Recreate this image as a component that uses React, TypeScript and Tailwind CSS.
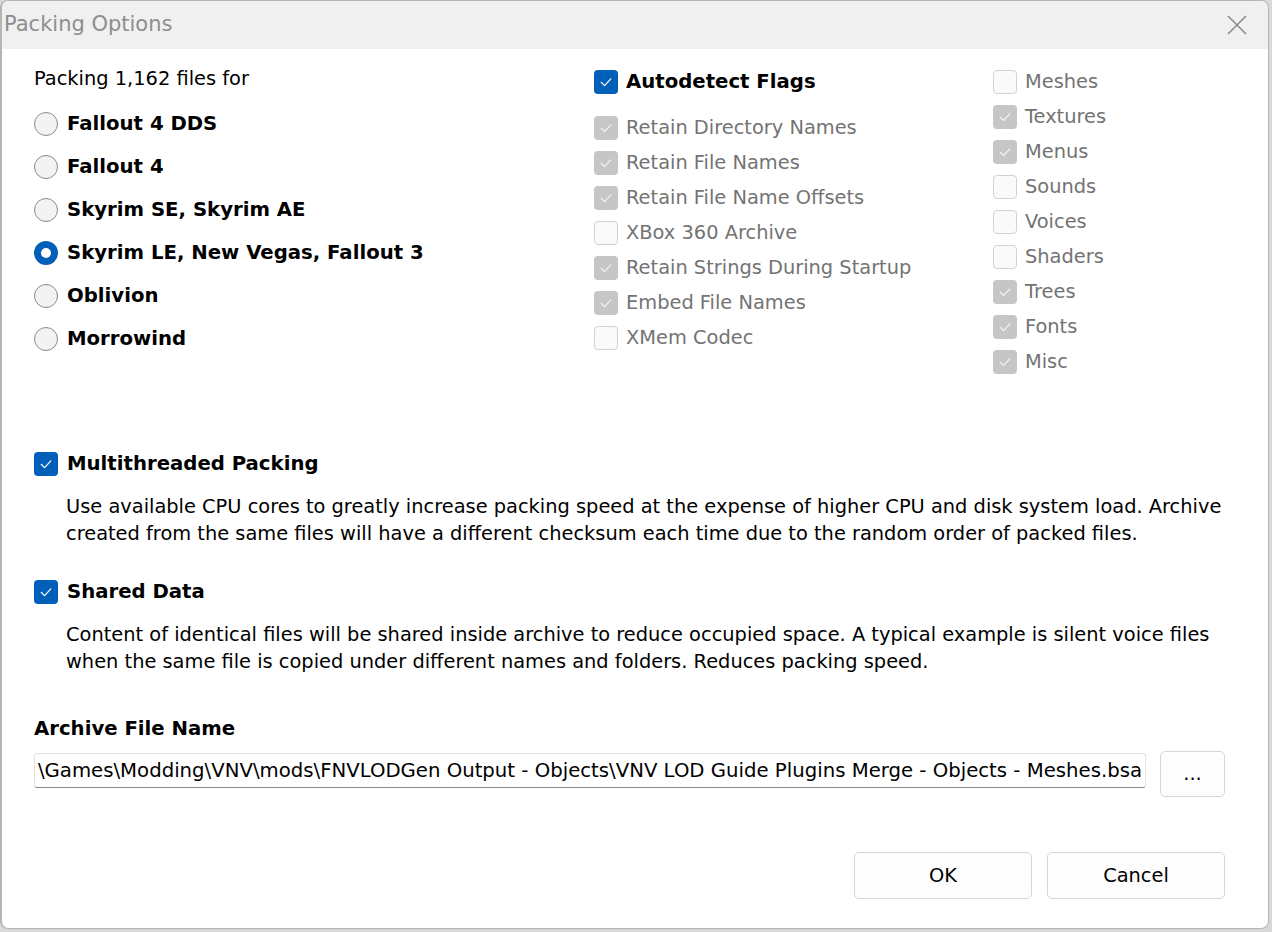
import React from 'react'

const font = { fontFamily: '"DejaVu Sans", Verdana, sans-serif' }

function Check({ color = 'white' }: { color?: string }) {
  return (
    <svg width="14" height="14" viewBox="0 0 14 14" fill="none">
      <path d="M2.2 7.3 L5.6 10.6 L11.8 3.8" stroke={color} strokeWidth="1.2" strokeLinecap="round" strokeLinejoin="round" />
    </svg>
  )
}

type BoxKind = 'blue' | 'gray' | 'empty'

function Box({ kind }: { kind: BoxKind }) {
  if (kind === 'blue') {
    return (
      <div className="w-[24px] h-[24px] rounded-[4px] bg-[#005fb8] flex items-center justify-center shrink-0">
        <Check />
      </div>
    )
  }
  if (kind === 'gray') {
    return (
      <div className="w-[24px] h-[24px] rounded-[4px] bg-[#c6c6c6] flex items-center justify-center shrink-0">
        <Check color="#f4f4f4" />
      </div>
    )
  }
  return <div className="w-[24px] h-[24px] rounded-[4px] border border-[#d2d2d2] bg-[#fafafa] shrink-0" />
}

function Radio({ checked, label }: { checked?: boolean; label: string }) {
  return (
    <div className="h-[43px] flex items-center gap-[9px]">
      {checked ? (
        <div className="w-[24px] h-[24px] rounded-full bg-[#005fb8] flex items-center justify-center shrink-0">
          <div className="w-[10px] h-[10px] rounded-full bg-white" />
        </div>
      ) : (
        <div className="w-[24px] h-[24px] rounded-full border border-[#8a8a8a] bg-[#f3f3f3] shrink-0" />
      )}
      <span className="font-bold text-[19.7px] text-black">{label}</span>
    </div>
  )
}

function Flag({ kind, label }: { kind: BoxKind; label: string }) {
  return (
    <div className="h-[35px] flex items-center gap-[8px]">
      <Box kind={kind} />
      <span className="text-[19.4px] text-[#737373]">{label}</span>
    </div>
  )
}

const games = ['Fallout 4 DDS', 'Fallout 4', 'Skyrim SE, Skyrim AE', 'Skyrim LE, New Vegas, Fallout 3', 'Oblivion', 'Morrowind']

const flags: [BoxKind, string][] = [
  ['gray', 'Retain Directory Names'],
  ['gray', 'Retain File Names'],
  ['gray', 'Retain File Name Offsets'],
  ['empty', 'XBox 360 Archive'],
  ['gray', 'Retain Strings During Startup'],
  ['gray', 'Embed File Names'],
  ['empty', 'XMem Codec'],
]

const types: [BoxKind, string][] = [
  ['empty', 'Meshes'],
  ['gray', 'Textures'],
  ['gray', 'Menus'],
  ['empty', 'Sounds'],
  ['empty', 'Voices'],
  ['empty', 'Shaders'],
  ['gray', 'Trees'],
  ['gray', 'Fonts'],
  ['gray', 'Misc'],
]

export default function App() {
  return (
    <div className="w-[1272px] h-[932px] bg-[#d9d9d9] overflow-hidden" style={font}>
      <div className="w-[1269px] h-[929px] rounded-[8px] border border-[#b4b4b4] border-l-2 bg-white flex flex-col overflow-hidden">
        {/* title bar */}
        <div className="h-[48px] bg-[#f0f0f0] flex items-center justify-between shrink-0">
          <span className="pl-[2px] text-[21px] text-[#8e8e8e]">Packing Options</span>
          <svg width="20" height="20" viewBox="0 0 20 20" className="mr-[21px]">
            <path d="M1 1 L19 19 M19 1 L1 19" stroke="#8c8c8c" strokeWidth="1.6" />
          </svg>
        </div>

        <div className="pl-[32px] pr-[43px] text-black">
          {/* top columns */}
          <div className="flex">
            <div className="w-[560px] pt-[10px]">
              <div className="h-[40px] flex items-center text-[19.4px]">Packing 1,162 files for</div>
              <div className="mt-[3px]">
                {games.map((g, i) => (
                  <Radio key={g} label={g} checked={i === 3} />
                ))}
              </div>
            </div>
            <div className="w-[399px] pt-[15px]">
              <div className="h-[35px] flex items-center gap-[8px]">
                <Box kind="blue" />
                <span className="font-bold text-[19.7px]">Autodetect Flags</span>
              </div>
              <div className="mt-[11px]">
                {flags.map(([k, l]) => (
                  <Flag key={l} kind={k} label={l} />
                ))}
              </div>
            </div>
            <div className="pt-[15px]">
              {types.map(([k, l]) => (
                <Flag key={l} kind={k} label={l} />
              ))}
            </div>
          </div>

          {/* options */}
          <div className="mt-[67px] h-[35px] flex items-center gap-[9px]">
            <Box kind="blue" />
            <span className="font-bold text-[19.7px]">Multithreaded Packing</span>
          </div>
          <div className="mt-[12px] pl-[32px] text-[19.4px] leading-[27px] whitespace-nowrap">
            <div>Use available CPU cores to greatly increase packing speed at the expense of higher CPU and disk system load. Archive</div>
            <div>created from the same files will have a different checksum each time due to the random order of packed files.</div>
          </div>

          <div className="mt-[27px] h-[35px] flex items-center gap-[9px]">
            <Box kind="blue" />
            <span className="font-bold text-[19.7px]">Shared Data</span>
          </div>
          <div className="mt-[12px] pl-[32px] text-[19.4px] leading-[27px] whitespace-nowrap">
            <div>Content of identical files will be shared inside archive to reduce occupied space. A typical example is silent voice files</div>
            <div>when the same file is copied under different names and folders. Reduces packing speed.</div>
          </div>

          <div className="mt-[36px] h-[35px] flex items-center font-bold text-[19.7px]">Archive File Name</div>
          <div className="mt-[5px] flex items-start gap-[14px]">
            <div className="mt-[2px] flex-1 h-[35px] border border-[#e3e3e3] border-b-[#8a8a8a] rounded-[3px] flex items-center justify-end overflow-hidden px-[3px]">
              <span className="whitespace-nowrap text-[19.7px]">
                \Games\Modding\VNV\mods\FNVLODGen Output - Objects\VNV LOD Guide Plugins Merge - Objects - Meshes.bsa
              </span>
            </div>
            <button className="w-[65px] h-[46px] rounded-[5px] border border-[#d6d6d6] bg-[#fdfdfd] text-[19.4px] flex items-center justify-center">
              ...
            </button>
          </div>

          <div className="mt-[55px] flex justify-end gap-[15px]">
            <button className="w-[178px] h-[47px] rounded-[5px] border border-[#d6d6d6] bg-[#fdfdfd] text-[19.4px]">OK</button>
            <button className="w-[178px] h-[47px] rounded-[5px] border border-[#d6d6d6] bg-[#fdfdfd] text-[19.4px]">Cancel</button>
          </div>
        </div>
      </div>
    </div>
  )
}
